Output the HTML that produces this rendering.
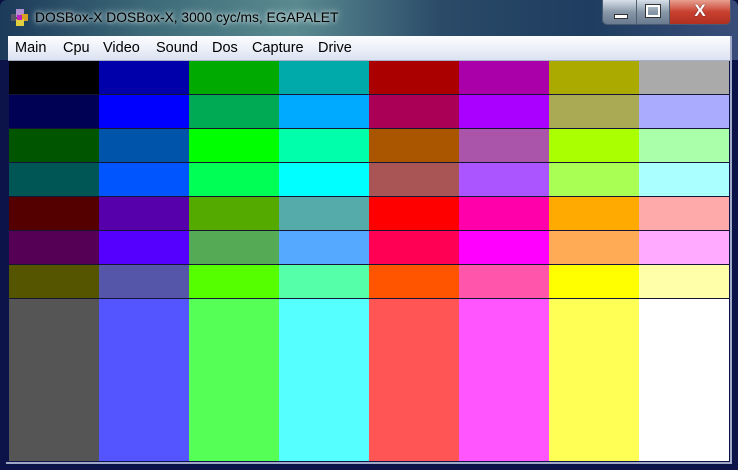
<!DOCTYPE html>
<html><head><style>
body{margin:0;width:738px;height:470px;overflow:hidden;background:#0a1040;font-family:"Liberation Sans",sans-serif;position:relative}
.frame{position:absolute;inset:0;border-radius:7px 7px 0 0;background:linear-gradient(90deg,#1c3a5a 0%,#3d6a78 20%,#5a8a90 40%,#2a4a68 60%,#1e3d60 80%,#3a4d7a 100%);}
.frame2{position:absolute;left:0;right:0;top:60px;bottom:0;background:#0c1348;}
.title{position:absolute;left:35px;top:10px;font-size:13.8px;color:#000;text-shadow:0 0 8px #cfe0e0,0 0 4px #dfeeee}
.menu{position:absolute;left:8px;top:36px;width:722px;height:24px;background:linear-gradient(#fcfdff,#eef2f9 45%,#dbe2f1);border-bottom:1px solid #a8b0c8;font-size:14.5px}
.menu span{position:absolute;top:4px;color:#000}
.grid{position:absolute;left:9px;top:61px;width:720px;height:400px}
.row{display:flex;height:33px;border-bottom:1px solid #151535}
.row.last{height:162px;border:0}
.row div{width:90px}
.btns{position:absolute;left:602px;top:0;height:24px;width:127px;border:1px solid #4a5a70;border-top:0;border-radius:0 0 5px 5px;overflow:hidden;display:flex}
.b{height:24px;background:linear-gradient(#d8e0ea,#8898a8 50%,#6a7a90);border-right:1px solid #506070;position:relative}
.x{background:linear-gradient(#e8a090,#c84030 50%,#b03020);border:0}
</style></head><body>
<div class="frame"></div><div class="frame2"></div>
<div style="position:absolute;left:730px;top:36px;width:2px;height:427px;background:#a0a8c8"></div>
<div style="position:absolute;left:6px;top:462px;width:726px;height:2px;background:#a0a8c8"></div>
<svg style="position:absolute;left:10px;top:9px" width="20" height="18"><rect x="1" y="5" width="7" height="7" fill="#556"/><rect x="6" y="0" width="8" height="8" fill="#b090d0"/><rect x="11" y="5" width="7" height="7" fill="#d8a020"/><rect x="6" y="10" width="8" height="7" fill="#e0d040"/><rect x="7" y="6" width="5" height="5" fill="#c020c0"/></svg>
<div class="title">DOSBox-X DOSBox-X, 3000 cyc/ms, EGAPALET</div>
<div class="btns"><div class="b" style="width:34px"><div style="position:absolute;left:11px;top:14px;width:12px;height:3px;background:#fff;border:1px solid #333"></div></div><div class="b" style="width:32px"><div style="position:absolute;left:9px;top:5px;width:10px;height:8px;border:2px solid #fff;outline:1px solid #333"></div></div><div class="b x" style="width:61px;text-align:center;color:#fff;font-weight:bold;font-size:17px;line-height:22px;text-shadow:0 0 1px #000">X</div></div>
<div class="menu"><span style="left:7px">Main</span><span style="left:55px">Cpu</span><span style="left:95px">Video</span><span style="left:148px">Sound</span><span style="left:204px">Dos</span><span style="left:244px">Capture</span><span style="left:310px">Drive</span></div>
<div class="grid">
<div class="row"><div style="background:#000000"></div><div style="background:#0000AA"></div><div style="background:#00AA00"></div><div style="background:#00AAAA"></div><div style="background:#AA0000"></div><div style="background:#AA00AA"></div><div style="background:#AAAA00"></div><div style="background:#AAAAAA"></div></div>
<div class="row"><div style="background:#000055"></div><div style="background:#0000FF"></div><div style="background:#00AA55"></div><div style="background:#00AAFF"></div><div style="background:#AA0055"></div><div style="background:#AA00FF"></div><div style="background:#AAAA55"></div><div style="background:#AAAAFF"></div></div>
<div class="row"><div style="background:#005500"></div><div style="background:#0055AA"></div><div style="background:#00FF00"></div><div style="background:#00FFAA"></div><div style="background:#AA5500"></div><div style="background:#AA55AA"></div><div style="background:#AAFF00"></div><div style="background:#AAFFAA"></div></div>
<div class="row"><div style="background:#005555"></div><div style="background:#0055FF"></div><div style="background:#00FF55"></div><div style="background:#00FFFF"></div><div style="background:#AA5555"></div><div style="background:#AA55FF"></div><div style="background:#AAFF55"></div><div style="background:#AAFFFF"></div></div>
<div class="row"><div style="background:#550000"></div><div style="background:#5500AA"></div><div style="background:#55AA00"></div><div style="background:#55AAAA"></div><div style="background:#FF0000"></div><div style="background:#FF00AA"></div><div style="background:#FFAA00"></div><div style="background:#FFAAAA"></div></div>
<div class="row"><div style="background:#550055"></div><div style="background:#5500FF"></div><div style="background:#55AA55"></div><div style="background:#55AAFF"></div><div style="background:#FF0055"></div><div style="background:#FF00FF"></div><div style="background:#FFAA55"></div><div style="background:#FFAAFF"></div></div>
<div class="row"><div style="background:#555500"></div><div style="background:#5555AA"></div><div style="background:#55FF00"></div><div style="background:#55FFAA"></div><div style="background:#FF5500"></div><div style="background:#FF55AA"></div><div style="background:#FFFF00"></div><div style="background:#FFFFAA"></div></div>
<div class="row last"><div style="background:#555555"></div><div style="background:#5555FF"></div><div style="background:#55FF55"></div><div style="background:#55FFFF"></div><div style="background:#FF5555"></div><div style="background:#FF55FF"></div><div style="background:#FFFF55"></div><div style="background:#FFFFFF"></div></div>
</div>
</body></html>
